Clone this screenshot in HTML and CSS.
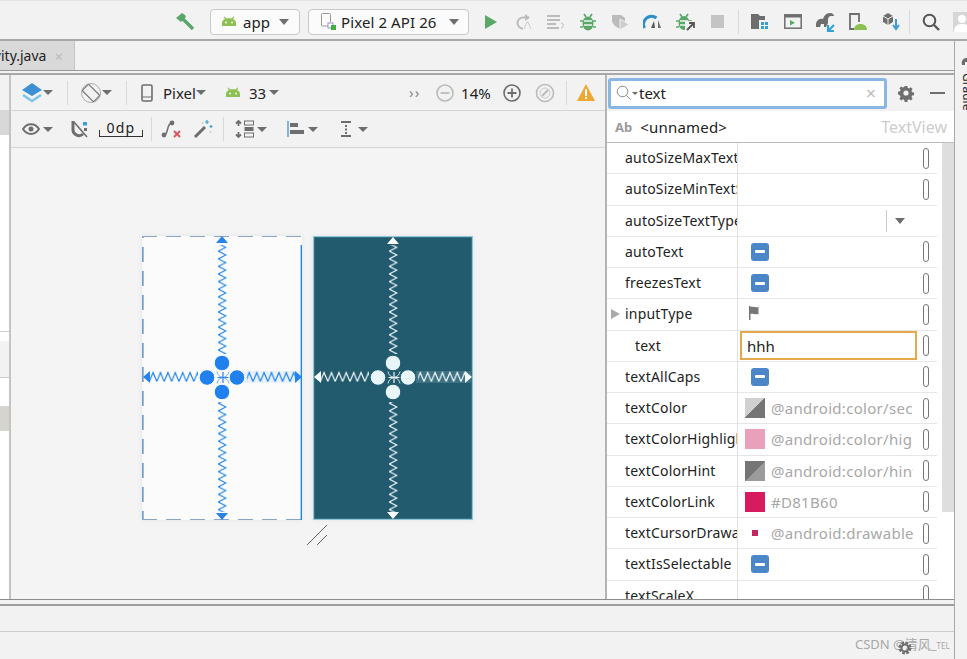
FILE: index.html
```html
<!DOCTYPE html>
<html lang="en">
<head>
    <meta charset="UTF-8">
    <title>Layout Editor - text attribute</title>
    <link rel="stylesheet" href="styles.css">
</head>
<body>
    <!-- Main toolbar -->
    <header class="topbar">
        <span class="hammer">
            <svg width="20" height="20" viewBox="0 0 20 20"><path d="M1 6 7 1l3 2 1 2-5 5z" fill="#59a869"/><path d="M8 7l10 10" stroke="#59a869" stroke-width="3.4"/></svg>
        </span>
        <div class="combo combo-app">
            <svg width="16" height="11" viewBox="0 0 16 11"><path d="M1 10V7c0-2 1-3 3-4L2.500 1l1-.5 1.800 2c1.700-.5 3.700-.5 5.400 0l1.800-2 1 .5L12 3c2 1 3 2 3 4v3z" fill="#8cc152"/><circle cx="5" cy="6.500" r=".9" fill="#fff"/><circle cx="11" cy="6.500" r=".9" fill="#fff"/></svg>
            <span>app</span>
            <span class="caret"></span>
        </div>
        <div class="combo combo-device">
            <svg width="18" height="20" viewBox="0 0 18 20"><path d="M11 14H2.500a1 1 0 0 1-1-1V2.500a1 1 0 0 1 1-1h7a1 1 0 0 1 1 1V10" fill="none" stroke="#999"/><rect x="8" y="11" width="5" height="5" fill="#fff" stroke="#a78bc8"/><rect x="11" y="13" width="5" height="5" fill="#3bb33b"/></svg>
            <span>Pixel 2 API 26</span>
            <span class="caret"></span>
        </div>
        <span class="tool run"><svg width="14" height="16" viewBox="0 0 14 16"><path d="M1 1l12 7-12 7z" fill="#59a869"/></svg></span>
        <span class="tool run"><svg width="18" height="18" viewBox="0 0 18 18"><path d="M11 4.500H8a5.500 5.500 0 1 0 0 11" fill="none" stroke="#bbb" stroke-width="2"/><path d="M10 1l5 3.500L10 8z" fill="#bbb"/><path d="M9 16l3-7h1l3 7" fill="none" stroke="#ccc"/></svg></span>
        <span class="tool run"><svg width="20" height="16" viewBox="0 0 20 16"><path d="M1 2h13M1 6h13M1 10h9M1 14h12" stroke="#bbb" stroke-width="1.800"/><path d="M15 9c3 0 3 5 0 5" fill="none" stroke="#bbb"/></svg></span>
        <span class="tool run"><svg width="18" height="18" viewBox="0 0 18 18"><path d="M5 1l2 3M13 1l-2 3M1 8h3M14 8h3M1 14h3M14 14h3" stroke="#59a869" stroke-width="1.600"/><ellipse cx="9" cy="10.500" rx="5.500" ry="7" fill="#59a869"/><path d="M5 8h8M5 12h8" stroke="#f2f2f2" stroke-width="1.500"/></svg></span>
        <span class="tool run"><svg width="20" height="18" viewBox="0 0 20 18"><path d="M1 2h9l4 3v5l-4 6c-4-1-8-4-9-8z" fill="#bbb"/><path d="M9 6l9 5.500L9 17z" fill="#ccc" stroke="#f2f2f2"/></svg></span>
        <span class="tool run"><svg width="20" height="16" viewBox="0 0 20 16"><path d="M1.500 14a8 8 0 0 1 12-10" fill="none" stroke="#2d8fc9" stroke-width="3"/><path d="M8 14l3-7 1 7z" fill="#555"/><path d="M15 6l3 8h-3z" fill="#6e6e6e"/></svg></span>
        <span class="tool run"><svg width="20" height="18" viewBox="0 0 20 18"><path d="M4 1l2 3M12 1l-2 3M0 8h3M13 8h3M0 14h3" stroke="#59a869" stroke-width="1.600"/><ellipse cx="8" cy="10" rx="5.500" ry="7" fill="#59a869"/><path d="M4 8h8M4 12h8" stroke="#f2f2f2" stroke-width="1.500"/><rect x="9" y="8" width="11" height="10" fill="#f2f2f2"/><path d="M11 17l7-7M13 10h5v5" fill="none" stroke="#555" stroke-width="1.800"/></svg></span>
        <span class="tool run"><span class="stop"></span></span>
        <span class="divider divider-a"></span>
        <span class="tool sdk"><svg width="18" height="15" viewBox="0 0 18 15"><path d="M0 0h7l2 2h5v4H8v9H0z" fill="#6e6e6e"/><path d="M10 8h3v3h-3zM14 8h3v3h-3zM10 12h3v3h-3zM14 12h3v3h-3z" fill="#389fd6"/></svg></span>
        <span class="tool sdk"><svg width="18" height="15" viewBox="0 0 18 15"><rect x=".8" y=".8" width="16.400" height="13.400" fill="none" stroke="#6e6e6e" stroke-width="1.500"/><path d="M1 1h16v2.500H1z" fill="#6e6e6e"/><path d="M6 6l5 2.700L6 11.500z" fill="#59a869"/></svg></span>
        <span class="tool sdk"><svg width="20" height="20" viewBox="0 0 20 20"><path d="M0 15c-1-6 3-9 7-8 1-3 3-6 7-6 3 0 4 2 4 3h-3c-2 0-3 2-3 4v3l-2 4H8v-3H5l-1 3z" fill="#6e6e6e"/><path d="M12 19l6-6M12 13v6h6" fill="none" stroke="#389fd6" stroke-width="2.200"/></svg></span>
        <span class="tool sdk"><svg width="20" height="19" viewBox="0 0 20 19"><path d="M6 17H2V2h9v8" fill="none" stroke="#6e6e6e" stroke-width="1.800"/><path d="M6 18c0-4 3-6 6.500-6s6.500 2 6.500 6z" fill="#8cc152"/></svg></span>
        <span class="tool sdk"><svg width="18" height="19" viewBox="0 0 18 19"><path d="M1 4l5-3 5 3v6l-5 3-5-3z" fill="#6e6e6e"/><path d="M1 4l5 3 5-3M6 7v6" fill="none" stroke="#f2f2f2"/><path d="M14 7v9M11 13l3 4 3-4" fill="none" stroke="#389fd6" stroke-width="2"/></svg></span>
        <span class="divider divider-b"></span>
        <span class="tool search"><svg width="18" height="18" viewBox="0 0 18 18"><circle cx="7.500" cy="7.500" r="5.800" fill="none" stroke="#555" stroke-width="2"/><path d="M12 12l5 5" stroke="#555" stroke-width="2.400"/></svg></span>
        <span class="avatar"><svg width="20" height="20" viewBox="0 0 20 20"><rect width="20" height="20" fill="#d6d6d6"/><circle cx="9" cy="7" r="4" fill="#fff"/><path d="M1 20c0-6 3-8 8-8s8 2 8 8z" fill="#fff"/></svg></span>
    </header>

    <div class="shell">
        <div class="workspace">
            <!-- Editor tabs -->
            <div class="tabs">
                <div class="tab">
                    <span>MainActivity.java</span>
                    <span class="tab-close">&times;</span>
                </div>
            </div>

            <div class="editor">
                <!-- Palette, cut off on the left -->
                <aside class="palette">
                    <div class="palette-head"></div>
                    <div class="palette-item"></div>
                    <div class="palette-blank"></div>
                    <div class="palette-band"></div>
                    <div class="palette-gap"></div>
                    <div class="palette-item palette-selected"></div>
                </aside>

                <!-- Design surface -->
                <section class="designer">
                    <div class="design-bar">
                        <svg width="22" height="22" viewBox="0 0 22 22"><path d="M11 1l10 7-10 6L1 8z" fill="#3d8fd6"/><path d="M2 13l9 6 9-6" fill="none" stroke="#7ec3ee" stroke-width="2.400"/></svg>
                        <span class="caret small"></span>
                        <span class="divider m-14"></span>
                        <svg class="m-12" width="22" height="22" viewBox="0 0 22 22"><circle cx="11" cy="11" r="9.500" fill="none" stroke="#999" stroke-width=".8"/><rect x="6.500" y="3" width="9" height="16" rx="1" transform="rotate(-45 11 11)" fill="#f2f2f2" stroke="#777" stroke-width="1.200"/></svg>
                        <span class="caret small"></span>
                        <span class="divider m-14"></span>
                        <svg class="m-14" width="12" height="18" viewBox="0 0 12 18"><rect x="1" y="1" width="10" height="16" rx="1.500" fill="none" stroke="#6e6e6e" stroke-width="1.600"/><path d="M1 13h10" stroke="#6e6e6e"/></svg>
                        <span class="bar-label m-10">Pixel</span>
                        <span class="caret small"></span>
                        <svg class="m-19" width="16" height="11" viewBox="0 0 16 11"><path d="M1 10V7c0-2 1-3 3-4L2.500 1l1-.5 1.800 2c1.700-.5 3.700-.5 5.400 0l1.800-2 1 .5L12 3c2 1 3 2 3 4v3z" fill="#8cc152"/><circle cx="5" cy="6.500" r=".9" fill="#fff"/><circle cx="11" cy="6.500" r=".9" fill="#fff"/></svg>
                        <span class="bar-label m-8">33</span>
                        <span class="caret small m-3"></span>
                        <span class="chevrons">&rsaquo;&rsaquo;</span>
                        <svg class="m-14" width="18" height="18" viewBox="0 0 18 18"><circle cx="9" cy="9" r="8" fill="none" stroke="#bbb" stroke-width="1.600"/><path d="M4.500 9h9" stroke="#bbb" stroke-width="1.800"/></svg>
                        <span class="bar-label m-7">14%</span>
                        <svg class="m-12" width="18" height="18" viewBox="0 0 18 18"><circle cx="9" cy="9" r="8" fill="none" stroke="#6e6e6e" stroke-width="1.600"/><path d="M4.500 9h9M9 4.500v9" stroke="#6e6e6e" stroke-width="1.800"/></svg>
                        <svg class="m-14" width="20" height="20" viewBox="0 0 20 20"><circle cx="10" cy="10" r="8.500" fill="none" stroke="#bbb" stroke-width="1.600"/><circle cx="10" cy="10" r="5" fill="none" stroke="#ccc"/><path d="M7 13l6-6" stroke="#bbb" stroke-width="2"/></svg>
                        <span class="divider m-11"></span>
                        <svg class="m-10" width="18" height="17" viewBox="0 0 18 17"><path d="M9 0l9 17H0z" fill="#f0a732"/><path d="M9 5v7M9 13v2" stroke="#fff" stroke-width="2"/></svg>
                    </div>
                    <div class="design-bar second">
                        <svg class="m-1" width="18" height="12" viewBox="0 0 18 12"><path d="M1 6c4-6.500 12-6.500 16 0-4 6.500-12 6.500-16 0z" fill="none" stroke="#6e6e6e" stroke-width="2"/><circle cx="9" cy="6" r="2.500" fill="#6e6e6e"/></svg>
                        <span class="caret small m-3"></span>
                        <svg class="m-18" width="18" height="18" viewBox="0 0 18 18"><path d="M2 1v8a6 6 0 0 0 10 5" fill="none" stroke="#6e6e6e" stroke-width="3"/><path d="M3 2l13 15" stroke="#6e6e6e" stroke-width="1.600"/><rect x="12" y="2" width="4" height="3.500" fill="#389fd6"/><rect x="13" y="8" width="3" height="3" fill="#6e6e6e"/></svg>
                        <span class="margin-box">0dp</span>
                        <span class="divider m-8"></span>
                        <svg class="m-9" width="22" height="20" viewBox="0 0 22 20"><path d="M3 16c5 0 2-12 8-12" fill="none" stroke="#6e6e6e" stroke-width="1.600"/><circle cx="3" cy="16" r="2.400" fill="#6e6e6e"/><circle cx="11" cy="4" r="2.400" fill="#6e6e6e"/><path d="M13 12l6 6M19 12l-6 6" stroke="#db5860" stroke-width="2"/></svg>
                        <svg class="m-10" width="20" height="20" viewBox="0 0 20 20"><path d="M2 18L12 8" stroke="#6e6e6e" stroke-width="3"/><path d="M14 1v4M12 3h4M18 6v3M16.500 7.500h3" stroke="#389fd6" stroke-width="1.200"/><path d="M9 3l1 2M17 12l1 2" stroke="#bbb"/></svg>
                        <span class="divider m-10"></span>
                        <svg class="m-11" width="20" height="18" viewBox="0 0 20 18"><path d="M3.500 1v5M1 3.500L3.500 1 6 3.500M3.500 17v-5M1 14.500L3.500 17 6 14.500" fill="none" stroke="#6e6e6e" stroke-width="1.800"/><rect x="9.500" y="1" width="9" height="4" fill="none" stroke="#6e6e6e"/><rect x="9.500" y="7" width="9" height="4" fill="#6e6e6e"/><rect x="9.500" y="13" width="9" height="4" fill="none" stroke="#6e6e6e"/></svg>
                        <span class="caret small m-2"></span>
                        <svg class="m-20" width="18" height="16" viewBox="0 0 18 16"><path d="M1 0v16" stroke="#5a9fd8" stroke-width="1.500"/><rect x="3" y="2" width="8" height="4" fill="#6e6e6e"/><rect x="3" y="9" width="14" height="4" fill="#6e6e6e"/></svg>
                        <span class="caret small m-3"></span>
                        <svg class="m-22" width="12" height="18" viewBox="0 0 12 18"><path d="M1 1h10v2H1zM1 15h10v2H1zM5 5h2v2H5zM5 8.500h2v2H5zM5 12h2v2H5z" fill="#6e6e6e"/></svg>
                        <span class="caret small m-6"></span>
                    </div>
                    <div class="canvas">
                        <div class="screens">
                            <svg class="screen blueprint" width="160" height="284" viewBox="0 0 160 284">
                                <defs>
                                    <pattern id="zigV" width="10" height="7.600" patternUnits="userSpaceOnUse" x="75"><path d="M1.200 0l7.600 3.800L1.200 7.600" fill="none" stroke="#2484ea" stroke-width="1.200"/></pattern>
                                    <pattern id="zigH" width="7.400" height="12" patternUnits="userSpaceOnUse" y="135"><path d="M0 10.500l3.700-9 3.700 9" fill="none" stroke="#2484ea" stroke-width="1.200"/></pattern>
                                </defs>
                                <rect width="160" height="284" fill="#fbfbfc"/>
                                <path d="M.8 284V0" fill="none" stroke="#6f9fd0" stroke-width="1.800" stroke-dasharray="15 9" stroke-dashoffset="6"/>
                                <path d="M0 .5h160M0 283.500h160" fill="none" stroke="#8aa6c4" stroke-width="1" stroke-dasharray="15 9"/>
                                <path d="M159.300 9v275" stroke="#1e88e5" stroke-width="1.400"/>
                                <rect x="100" y="135" width="58" height="12" fill="#e9f1f9"/>
                                <rect x="75" y="9" width="10" height="109" fill="url(#zigV)"/>
                                <rect x="75" y="166" width="10" height="110" fill="url(#zigV)"/>
                                <rect x="8" y="135" width="48" height="12" fill="url(#zigH)"/>
                                <rect x="105" y="135" width="48" height="12" fill="url(#zigH)"/>
                                <path d="M80 0l6 7H74zM80 284l-6-7h12zM1 141l7-6v12zM160 141l-7-6v12z" fill="#2484ea"/>
                                <g fill="#1f80ee" stroke="#fff">
                                    <circle cx="80" cy="127" r="7.800"/><circle cx="80" cy="156" r="7.800"/><circle cx="65" cy="141.500" r="7.800"/><circle cx="95" cy="141.500" r="7.800"/>
                                </g>
                                <path d="M81 136v11M75.500 141.500h11" fill="none" stroke="#2484ea" stroke-width="1.200"/>
                                <path d="M75 135.500q1 5 5 5.500M87 135.500q-1 5-5 5.500M75 147.500q1-5 5-5.500M87 147.500q-1-5-5-5.500" fill="none" stroke="#6fb0f2"/>
                            </svg>
                            <svg class="screen teal" width="160" height="284" viewBox="0 0 160 284">
                                <defs>
                                    <pattern id="zigVw" width="10" height="7.600" patternUnits="userSpaceOnUse" x="75"><path d="M1.200 0l7.600 3.800L1.200 7.600" fill="none" stroke="#f2fafc" stroke-width="1.200"/></pattern>
                                    <pattern id="zigHw" width="7.400" height="12" patternUnits="userSpaceOnUse" y="135"><path d="M0 10.500l3.700-9 3.700 9" fill="none" stroke="#f2fafc" stroke-width="1.200"/></pattern>
                                </defs>
                                <rect width="160" height="284" fill="#225a6e"/>
                                <rect x=".6" y=".6" width="158.800" height="282.800" fill="none" stroke="#8cc5d8" stroke-width="1.200"/>
                                <rect x="103" y="135" width="55" height="12" fill="#3e7184"/>
                                <rect x="75" y="9" width="10" height="109" fill="url(#zigVw)"/>
                                <rect x="75" y="166" width="10" height="110" fill="url(#zigVw)"/>
                                <rect x="8" y="135" width="48" height="12" fill="url(#zigHw)"/>
                                <rect x="105" y="135" width="48" height="12" fill="url(#zigHw)"/>
                                <path d="M80 1l6 7H74zM80 283l-6-7h12zM1 141l7-6v12zM159 141l-7-6v12z" fill="#f6fbfc"/>
                                <g fill="#e8f5f9" stroke="#225a6e">
                                    <circle cx="80" cy="127" r="7.800"/><circle cx="80" cy="156" r="7.800"/><circle cx="65" cy="141.500" r="7.800"/><circle cx="95" cy="141.500" r="7.800"/>
                                </g>
                                <path d="M81 136v11M75.500 141.500h11" fill="none" stroke="#f2fafc" stroke-width="1.200"/>
                                <path d="M75 135.500q1 5 5 5.500M87 135.500q-1 5-5 5.500M75 147.500q1-5 5-5.500M87 147.500q-1-5-5-5.500" fill="none" stroke="#cfe6ee"/>
                            </svg>
                        </div>
                        <svg class="resize" width="24" height="22" viewBox="0 0 24 22"><path d="M1 21L21 1M11 21l10-10" stroke="#666"/></svg>
                    </div>
                </section>

                <!-- Attributes panel -->
                <section class="attributes">
                    <div class="search-row">
                        <div class="search-box">
                            <svg width="16" height="16" viewBox="0 0 16 16"><circle cx="6.500" cy="6.500" r="5.300" fill="none" stroke="#888"/><path d="M10.500 10.500l4 4" stroke="#888"/></svg>
                            <span class="caret tiny"></span>
                            <span class="search-text">text</span>
                            <span class="search-clear">&times;</span>
                        </div>
                        <svg class="gear" width="18" height="18" viewBox="0 0 18 18"><path d="M7.500 1h3l.4 2.200 1.600.7 1.900-1.300 2 2-1.300 1.900.7 1.600 2.200.4v3l-2.200.4-.7 1.600 1.300 1.900-2 2-1.900-1.300-1.600.7-.4 2.200h-3l-.4-2.200-1.600-.7-1.900 1.300-2-2 1.300-1.900-.7-1.600L0 10.500v-3l2.200-.4.7-1.600L1.600 3.600l2-2 1.900 1.300 1.600-.7z" transform="translate(1 1) scale(.89)" fill="#6e6e6e"/><circle cx="9" cy="9" r="2.600" fill="#f2f2f2"/></svg>
                        <span class="hide-bar"></span>
                    </div>
                    <div class="component-row">
                        <span class="ab">Ab</span>
                        <span class="component-id">&lt;unnamed&gt;</span>
                        <span class="component-type">TextView</span>
                    </div>
                    <div class="attr-scroll">
                        <div class="attr-list">
                            <div class="attr"><span class="attr-name">autoSizeMaxTextSize</span><span class="attr-value"></span><span class="pill"></span></div>
                            <div class="attr"><span class="attr-name">autoSizeMinTextSize</span><span class="attr-value"></span><span class="pill"></span></div>
                            <div class="attr"><span class="attr-name">autoSizeTextType</span><span class="attr-value dropdown"><span class="caret"></span></span></div>
                            <div class="attr"><span class="attr-name">autoText</span><span class="attr-value"><span class="check"></span></span><span class="pill"></span></div>
                            <div class="attr"><span class="attr-name">freezesText</span><span class="attr-value"><span class="check"></span></span><span class="pill"></span></div>
                            <div class="attr"><span class="expand"></span><span class="attr-name">inputType</span><span class="attr-value"><svg class="flag" width="12" height="14" viewBox="0 0 12 14"><path d="M1 0h1.500v14H1zM2.500 1c3-1 5 1 8 0v7c-3 1-5-1-8 0z" fill="#777"/></svg></span><span class="pill"></span></div>
                            <div class="attr"><span class="attr-name indent">text</span><span class="attr-value"><span class="text-edit">hhh</span></span><span class="pill"></span></div>
                            <div class="attr"><span class="attr-name">textAllCaps</span><span class="attr-value"><span class="check"></span></span><span class="pill"></span></div>
                            <div class="attr"><span class="attr-name">textColor</span><span class="attr-value"><span class="swatch sw-light"></span><span class="ref">@android:color/secondary_text</span></span><span class="pill"></span></div>
                            <div class="attr"><span class="attr-name">textColorHighlight</span><span class="attr-value"><span class="swatch sw-pink"></span><span class="ref">@android:color/highlighted_text</span></span><span class="pill"></span></div>
                            <div class="attr"><span class="attr-name">textColorHint</span><span class="attr-value"><span class="swatch sw-dark"></span><span class="ref">@android:color/hint_foreground</span></span><span class="pill"></span></div>
                            <div class="attr"><span class="attr-name">textColorLink</span><span class="attr-value"><span class="swatch sw-link"></span><span class="ref">#D81B60</span></span><span class="pill"></span></div>
                            <div class="attr"><span class="attr-name">textCursorDrawable</span><span class="attr-value"><span class="swatch sw-cursor"><span class="cursor-dot"></span></span><span class="ref">@android:drawable/text_cursor</span></span><span class="pill"></span></div>
                            <div class="attr"><span class="attr-name">textIsSelectable</span><span class="attr-value"><span class="check"></span></span><span class="pill"></span></div>
                            <div class="attr"><span class="attr-name">textScaleX</span><span class="attr-value"></span><span class="pill"></span></div>
                        </div>
                        <div class="scrollbar"><div class="thumb"></div></div>
                    </div>
                </section>
            </div>

            <!-- Bottom tool window -->
            <div class="bottom-panel"></div>
            <div class="status-bar">
                <span class="watermark">CSDN @清风_<small>TEL</small></span>
                <svg class="status-gear" width="16" height="16" viewBox="0 0 16 16"><circle cx="8" cy="8" r="5" fill="none" stroke="#6e6e6e" stroke-width="3" stroke-dasharray="2.500 1.400"/><circle cx="8" cy="8" r="3.500" fill="none" stroke="#6e6e6e" stroke-width="2"/></svg>
            </div>
        </div>

        <!-- Right tool strip -->
        <aside class="side-strip">
            <svg width="11" height="9" viewBox="0 0 11 9"><path d="M1 9C0 5 2 2 6 2c1-2 4-2 5 0v7H8V6H4v3z" fill="#6e6e6e"/></svg>
            <span class="side-label">Gradle</span>
        </aside>
    </div>
</body>
</html>
```

FILE: styles.css
```css
/* Reset */
* {
    margin: 0;
    padding: 0;
    box-sizing: border-box;
}

html, body {
    height: 659px;
    overflow: hidden;
}

body {
    display: flex;
    flex-direction: column;
    width: 967px;
    font-family: "Noto Sans", sans-serif;
    font-size: 14px;
    color: #222;
    background-color: #f2f2f2;
}

svg {
    display: block;
    flex-shrink: 0;
}

/* Shared bits */
.caret {
    display: inline-block;
    width: 0;
    height: 0;
    border-left: 5.5px solid transparent;
    border-right: 5.5px solid transparent;
    border-top: 6px solid #6e6e6e;
    flex-shrink: 0;
}

.caret.small {
    border-left-width: 5px;
    border-right-width: 5px;
    border-top-width: 5px;
}

.caret.tiny {
    border-left-width: 3px;
    border-right-width: 3px;
    border-top-width: 3px;
}

.divider {
    display: block;
    width: 1px;
    height: 24px;
    background-color: #d8d8d8;
    flex-shrink: 0;
}

/* Spacing used along the toolbars */
.m-1 { margin-left: 1px; }
.m-2 { margin-left: 2px; }
.m-3 { margin-left: 3px; }
.m-6 { margin-left: 6px; }
.m-7 { margin-left: 7px; }
.m-8 { margin-left: 8px; }
.m-9 { margin-left: 9px; }
.m-10 { margin-left: 10px; }
.m-11 { margin-left: 11px; }
.m-12 { margin-left: 12px; }
.m-14 { margin-left: 14px; }
.m-18 { margin-left: 18px; }
.m-19 { margin-left: 19px; }
.m-20 { margin-left: 20px; }
.m-22 { margin-left: 22px; }

/* Top toolbar */
.topbar {
    display: flex;
    align-items: center;
    flex-shrink: 0;
    height: 41px;
    padding-left: 175px;
    padding-top: 3px;
    overflow: hidden;
    border-top: 1px solid #e4e4e4;
    border-bottom: 2px solid #a8a8a8;
}

.topbar > * {
    flex-shrink: 0;
}

.hammer {
    width: 25px;
}

.combo {
    display: flex;
    align-items: center;
    height: 26px;
    font-size: 15px;
    background-color: #fbfbfb;
    border: 1px solid #c9c9c9;
    border-radius: 4px;
}

.combo-app {
    width: 90px;
    margin-left: 10px;
    padding-left: 10px;
    gap: 6px;
}

.combo-app .caret {
    margin-left: 3px;
}

.combo-device {
    width: 161px;
    margin-left: 8px;
    padding-left: 11px;
    gap: 3px;
}

.combo-device span:nth-child(2) {
    white-space: nowrap;
    letter-spacing: .1px;
}

.combo-device .caret {
    margin-left: 9px;
}

.tool {
    display: flex;
    justify-content: center;
    align-items: center;
}

.run {
    width: 32.4px;
}

.combo-device + .run {
    margin-left: 6px;
}

.stop {
    width: 13px;
    height: 13px;
    background-color: #c4c4c4;
}

.divider-a {
    margin: 0 5px 0 4px;
}

.sdk {
    width: 32.6px;
}

.divider-b {
    margin: 0 3px 0 2px;
}

.search {
    width: 36px;
}

.avatar {
    width: 20px;
    margin-left: 4px;
}

/* Below the toolbar */
.shell {
    display: flex;
    flex: 1;
    min-height: 0;
}

.workspace {
    display: flex;
    flex-direction: column;
    width: 955px;
    flex-shrink: 0;
    border-right: 1px solid #a8a8a8;
}

.side-strip {
    display: flex;
    flex-direction: column;
    align-items: flex-start;
    flex: 1;
    padding: 15px 0 0 6px;
    overflow: hidden;
    background-color: #f2f2f2;
}

.side-label {
    writing-mode: vertical-rl;
    font-size: 12px;
    line-height: 12px;
    margin-top: 8px;
}

/* Tabs */
.tabs {
    height: 30px;
    border-bottom: 1px solid #999;
}

.tab {
    display: flex;
    justify-content: flex-end;
    align-items: center;
    width: 75px;
    height: 29px;
    padding-right: 11px;
    gap: 8px;
    overflow: hidden;
    white-space: nowrap;
    font-size: 14px;
    background-color: #d9d9d9;
    border-right: 1px solid #c4c4c4;
}

.tab-close {
    font-size: 15px;
    color: #bbb;
}

/* Editor area */
.editor {
    display: flex;
    height: 527px;
    margin-top: 2px;
    border-top: 2px solid #a8a8a8;
    border-bottom: 1px solid #8c8c8c;
}

.palette {
    display: flex;
    flex-direction: column;
    width: 11px;
    background-color: #fff;
    border-right: 2px solid #c4c4c4;
}

.palette-head {
    height: 35px;
    background-color: #f2f2f2;
}

.palette-item {
    height: 25px;
    background-color: #d8d8d8;
}

.palette-blank {
    height: 197px;
    border-bottom: 1px solid #ccc;
}

.palette-band {
    height: 46px;
    background-color: #f2f2f2;
    border-top: 9px solid #fff;
    border-bottom: 1px solid #ccc;
}

.palette-gap {
    height: 28px;
}

.palette-selected {
    background-color: #d6d4cf;
}

/* Designer */
.designer {
    display: flex;
    flex-direction: column;
    width: 594px;
    flex-shrink: 0;
}

.design-bar {
    display: flex;
    align-items: center;
    height: 36px;
    padding-left: 10px;
    border-bottom: 1px solid #d4d4d4;
}

.design-bar.second {
    height: 37px;
}

.bar-label {
    font-size: 15px;
    white-space: nowrap;
}

.chevrons {
    width: 13px;
    margin-left: 130px;
    font-size: 15px;
    color: #888;
    letter-spacing: 1px;
    line-height: 1;
}

.margin-box {
    position: relative;
    width: 44px;
    height: 16px;
    margin-left: 10px;
    line-height: 14px;
    font-size: 14px;
    letter-spacing: 1.200px;
    text-align: center;
    border-bottom: 1px solid #333;
}

.margin-box::before,
.margin-box::after {
    content: "";
    position: absolute;
    bottom: 0;
    width: 1px;
    height: 6px;
    background-color: #333;
}

.margin-box::before {
    left: 0;
}

.margin-box::after {
    right: 0;
}

.canvas {
    flex: 1;
    padding: 88px 0 0 131px;
    background-color: #f4f4f4;
}

.screens {
    display: flex;
    gap: 11px;
}

.screen {
    box-shadow: 0 0 5px #e4e4e4;
}

.resize {
    margin: 4px 0 0 164px;
}

/* Attributes */
.attributes {
    display: flex;
    flex-direction: column;
    flex: 1;
    min-width: 0;
    background-color: #fff;
    border-left: 2px solid #b4b4b4;
}

.search-row {
    display: flex;
    align-items: center;
    height: 36px;
    padding-left: 1px;
    background-color: #f2f2f2;
}

.search-box {
    display: flex;
    align-items: center;
    width: 279px;
    height: 31px;
    padding-left: 5px;
    background-color: #fff;
    border: 3px solid #8ab6e4;
    border-radius: 3px;
}

.search-text {
    margin-left: 1px;
    font-size: 15px;
}

.search-clear {
    margin-left: auto;
    margin-right: 8px;
    font-size: 18px;
    line-height: 1;
    color: #bbb;
}

.gear {
    margin-left: 10px;
}

.hide-bar {
    width: 15px;
    height: 2px;
    margin-left: 15px;
    background-color: #6e6e6e;
}

.component-row {
    display: flex;
    align-items: center;
    height: 32px;
    padding: 0 7px 0 8px;
    border-bottom: 1px solid #bbb;
}

.ab {
    font-size: 13px;
    font-weight: 700;
    color: #9a9a9a;
}

.component-id {
    margin-left: 8px;
    font-size: 15px;
    letter-spacing: .2px;
}

.component-type {
    margin-left: auto;
    font-size: 16px;
    color: #ccc;
}

.attr-scroll {
    display: flex;
    flex: 1;
    min-height: 0;
    overflow: hidden;
}

.attr-list {
    width: 330px;
    flex-shrink: 0;
}

.attr {
    position: relative;
    display: flex;
    align-items: center;
    height: 31.25px;
    border-bottom: 1px solid #e6e6e6;
}

.attr-name {
    width: 131px;
    height: 100%;
    padding-left: 18px;
    line-height: 30px;
    font-size: 14px;
    letter-spacing: .2px;
    white-space: nowrap;
    overflow: hidden;
    flex-shrink: 0;
    border-right: 1px solid #e0e0e0;
}

.attr-name.indent {
    padding-left: 28px;
}

.expand {
    position: absolute;
    left: 4px;
    top: 10px;
    width: 0;
    height: 0;
    border-top: 5px solid transparent;
    border-bottom: 5px solid transparent;
    border-left: 9px solid #aaa;
}

.attr-value {
    display: flex;
    align-items: center;
    width: 180px;
    height: 100%;
    padding-left: 6px;
    overflow: hidden;
    flex-shrink: 0;
}

.attr-value.dropdown {
    width: 199px;
}

.dropdown::before {
    content: "";
    width: 1px;
    height: 22px;
    margin-left: 142px;
    background-color: #ccc;
}

.dropdown .caret {
    margin-left: 8px;
}

.check {
    position: relative;
    width: 18px;
    height: 18px;
    margin-left: 7px;
    background-color: #4a86c8;
    border-radius: 3px;
}

.check::after {
    content: "";
    position: absolute;
    left: 4px;
    top: 7.5px;
    width: 10px;
    height: 3px;
    background-color: #fff;
    border-radius: 1px;
}

.flag {
    margin: -2px 0 0 4px;
}

.text-edit {
    display: block;
    width: 177px;
    height: 29px;
    margin-left: -4px;
    padding-left: 5px;
    line-height: 26px;
    font-size: 15px;
    background-color: #fff;
    border: 2px solid #e5a84a;
}

.swatch {
    display: flex;
    justify-content: center;
    align-items: center;
    width: 20px;
    height: 20px;
    margin-left: 1px;
    flex-shrink: 0;
}

.sw-light { background: linear-gradient(135deg, #d0d0d0 50%, #757575 50%); }
.sw-pink { background-color: #e9a0bb; }
.sw-dark { background: linear-gradient(135deg, #757575 50%, #9b9b9b 50%); }
.sw-link { background-color: #d81b60; }

.cursor-dot {
    width: 6px;
    height: 6px;
    background-color: #c8245f;
}

.ref {
    width: 142px;
    margin-left: 6px;
    font-size: 15px;
    letter-spacing: .3px;
    color: #a8a8a8;
    white-space: nowrap;
    overflow: hidden;
    flex-shrink: 0;
}

.pill {
    width: 6px;
    height: 21px;
    margin-left: 5px;
    border: 1px solid #777;
    border-radius: 3px;
    flex-shrink: 0;
}

.scrollbar {
    flex: 1;
    margin-left: 5px;
}

.thumb {
    width: 12px;
    height: 369px;
    background-color: #dedede;
}

/* Bottom */
.bottom-panel {
    height: 28px;
    margin-top: 4px;
    border-top: 2px solid #9c9c9c;
    border-bottom: 1px solid #ccc;
}

.status-bar {
    position: relative;
    flex: 1;
}

.watermark {
    position: absolute;
    left: 855px;
    top: 2px;
    font-family: "Noto Sans", "Noto Sans CJK SC", sans-serif;
    font-size: 13px;
    color: #a8a8a8;
    white-space: nowrap;
}

.watermark small {
    font-size: 8px;
}

.status-gear {
    position: absolute;
    left: 897px;
    top: 8px;
}
```
